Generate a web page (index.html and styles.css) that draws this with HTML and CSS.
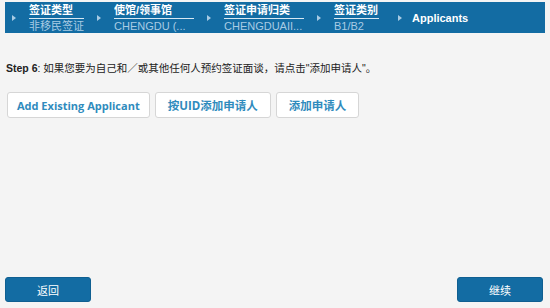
FILE: index.html
```html
<!DOCTYPE html>
<html>
<head>
<meta charset="utf-8">
<link rel="stylesheet" href="styles.css">
</head>
<body>
<div class="page">
  <div class="crumbs">
    <div class="crumb">
      <span class="arrow"></span>
      <div class="crumb-text">
        <div class="c-title">签证类型</div>
        <div class="c-sub">非移民签证</div>
      </div>
    </div>
    <div class="crumb">
      <span class="arrow"></span>
      <div class="crumb-text w80">
        <div class="c-title">使馆/领事馆</div>
        <div class="c-sub">CHENGDU (...</div>
      </div>
    </div>
    <div class="crumb">
      <span class="arrow"></span>
      <div class="crumb-text w80">
        <div class="c-title">签证申请归类</div>
        <div class="c-sub">CHENGDUAII...</div>
      </div>
    </div>
    <div class="crumb">
      <span class="arrow"></span>
      <div class="crumb-text w44">
        <div class="c-title">签证类别</div>
        <div class="c-sub">B1/B2</div>
      </div>
    </div>
    <div class="crumb current">
      <span class="arrow"></span>
      <div class="c-current">Applicants</div>
    </div>
  </div>

  <p class="step"><b>Step 6</b>: 如果您要为自己和／或其他任何人预约签证面谈，请点击"添加申请人"。</p>

  <div class="actions">
    <button class="btn-light latin">Add Existing Applicant</button>
    <button class="btn-light">按UID添加申请人</button>
    <button class="btn-light">添加申请人</button>
  </div>

  <div class="spacer"></div>

  <div class="footer">
    <button class="btn-primary">返回</button>
    <button class="btn-primary">继续</button>
  </div>
</div>
</body>
</html>
```

FILE: styles.css
```css
* { box-sizing: border-box; }
html, body { margin: 0; padding: 0; }
body {
  background: #f4f4f4;
  font-family: "Liberation Sans", Arial, "Noto Sans CJK SC", sans-serif;
  width: 550px;
  height: 308px;
  overflow: hidden;
}
.page {
  display: flex;
  flex-direction: column;
  height: 308px;
  padding: 2px 5px 6px 5px;
}
.crumbs {
  display: flex;
  align-items: center;
  background: #136ca3;
  height: 31px;
  padding-left: 7px;
}
.crumb {
  display: flex;
  align-items: center;
  margin-right: 13px;
}
.arrow {
  width: 0; height: 0;
  border-top: 3px solid transparent;
  border-bottom: 3px solid transparent;
  border-left: 4px solid #a8cbe4;
  margin-right: 13px;
  margin-top: 1px;
}
.crumb-text { display: flex; flex-direction: column; }
.crumb-text.w80 { width: 80px; }
.crumb-text.w44 { width: 45px; margin-right: 6px; }
.c-title {
  color: #fff;
  font-weight: bold;
  font-size: 11px;
  line-height: 13px;
  padding-bottom: 1px;
  border-bottom: 1px solid #d8e8f3;
  white-space: nowrap;
  overflow: hidden;
}
.c-sub {
  color: #a8cbe4;
  font-size: 11px;
  line-height: 12px;
  margin-top: 1px;
  white-space: nowrap;
  overflow: hidden;
}
.c-current {
  color: #fff;
  font-weight: bold;
  font-size: 11px;
}
.crumb.current .arrow { margin-right: 10px; }
.step {
  margin: 28px 0 0 1px;
  font-size: 10.5px;
  color: #222;
  line-height: 14px;
}
.step b { font-weight: bold; }
.actions {
  display: flex;
  gap: 5px;
  margin-top: 17px;
  margin-left: 2px;
}
.btn-light {
  background: #fff;
  border: 1px solid #d6d6d6;
  border-radius: 3px;
  height: 26px;
  padding: 0 12px;
  color: #2f8bbd;
  font-family: "Open Sans", "Noto Sans CJK SC", sans-serif;
  font-weight: bold;
  font-size: 11.5px;
  cursor: pointer;
}
.btn-light.latin { font-size: 11px; padding: 0 9px; }
.spacer { flex: 1; }
.footer {
  display: flex;
  justify-content: space-between;
  padding: 0 2px 0 0;
}
.btn-primary {
  width: 86px;
  height: 25px;
  background: #136ca3;
  border: 1px solid #0f5f91;
  border-radius: 3px;
  color: #fff;
  font-family: "Noto Sans CJK SC", sans-serif;
  font-size: 11px;
}
```
